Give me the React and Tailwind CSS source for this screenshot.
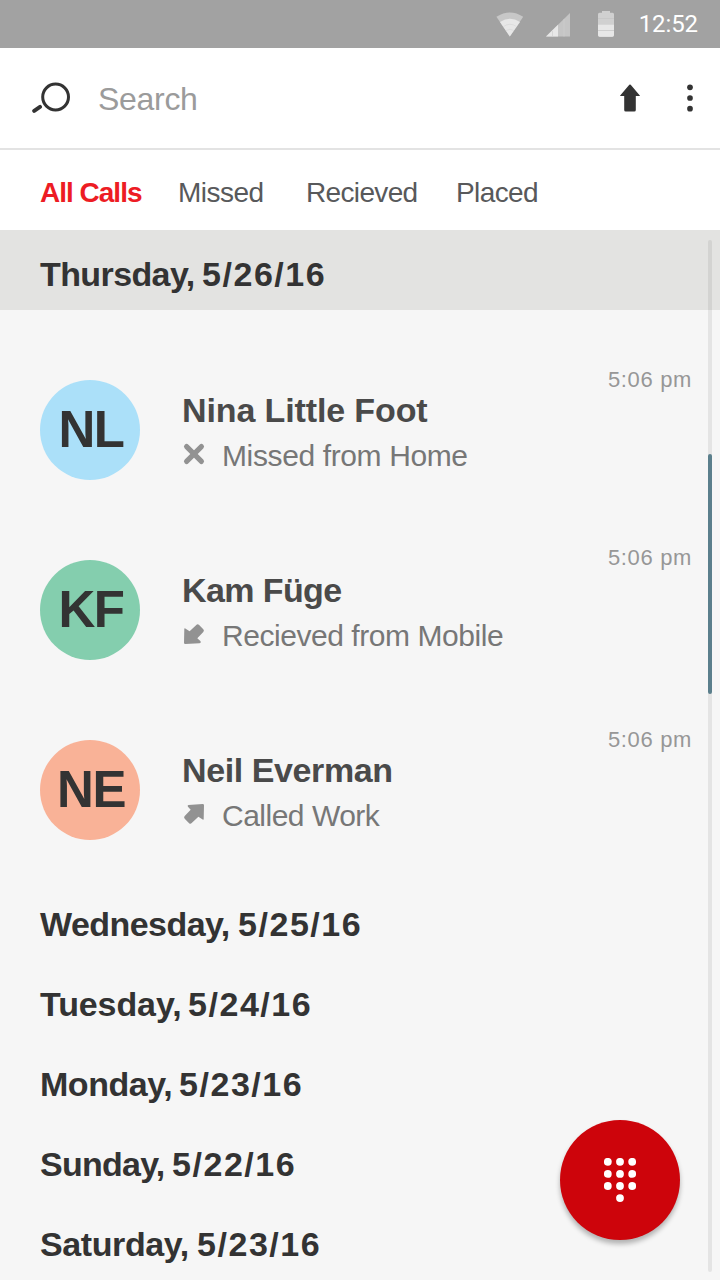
const calls = [
  {
    initials: 'NL',
    name: 'Nina Little Foot',
    nameClass: 'tracking-[-0.12px]',
    detail: 'Missed from Home',
    detailClass: 'tracking-[-0.38px]',
    color: 'bg-[#abe0f9]',
    kind: 'missed',
    timeClass: 'pt-7',
  },
  {
    initials: 'KF',
    name: 'Kam Füge',
    nameClass: 'tracking-[-0.6px]',
    detail: 'Recieved from Mobile',
    detailClass: 'tracking-[-0.45px]',
    color: 'bg-[#84ceae]',
    kind: 'received',
    timeClass: 'pt-[26px]',
  },
  {
    initials: 'NE',
    name: 'Neil Everman',
    nameClass: 'tracking-[-0.4px]',
    detail: 'Called Work',
    detailClass: 'tracking-[-0.5px]',
    color: 'bg-[#f9b297]',
    kind: 'placed',
    timeClass: 'pt-7',
  },
];

const days = [
  { name: 'Wednesday,', date: '5/25/16', nameClass: 'w-[198px] tracking-[-0.55px]' },
  { name: 'Tuesday,', date: '5/24/16', nameClass: 'w-[148px] tracking-[-0.1px]' },
  { name: 'Monday,', date: '5/23/16', nameClass: 'w-[139px] tracking-[-0.45px]' },
  { name: 'Sunday,', date: '5/22/16', nameClass: 'w-[132px] tracking-[-0.75px]' },
  { name: 'Saturday,', date: '5/23/16', nameClass: 'w-[157px] tracking-[-0.4px]' },
];

function StatusBar() {
  return (
    <div className="flex h-12 shrink-0 items-center justify-end bg-[#a2a2a2] pr-[22px] text-white">
      <svg className="mr-5 h-12 w-8" viewBox="0 0 32 48">
        <path d="M2.4 16.8 Q16 8.2 29.2 16.8 L15.8 36.5 Z" fill="#c7c7c7" />
        <path d="M6 22 Q16 15.4 26 22 L15.8 36.5 Z" fill="#e7e7e7" />
        <path d="M9.5 26.5 Q16 22 22.5 26.5 M12 30.5 Q16 28 20 30.5" fill="none" stroke="#d9d9d9" strokeWidth="0.8" />
      </svg>
      <svg className="mr-7 h-12 w-6" viewBox="0 0 24 48">
        <path d="M0 36.6 24 13V36.6Z" fill="#c5c5c5" />
        <path d="M0 36.6 12 24.8V36.6Z" fill="#e7e7e7" />
        <path d="M6.5 31V36.6 M18 19V36.6" stroke="#cfcfcf" strokeWidth="0.7" />
      </svg>
      <svg className="mr-[25px] h-12 w-4" viewBox="0 0 16 48">
        <path d="M4 11h8v1.8h2.5q1.5 0 1.5 1.5V35q0 1.7-1.7 1.7H1.7Q0 36.7 0 35V14.3q0-1.5 1.5-1.5H4Z" fill="#d0d0d0" />
        <path d="M0 24.8h16V35q0 1.7-1.7 1.7H1.7Q0 36.7 0 35Z" fill="#e7e7e7" />
        <path d="M0 18.5h16M0 30.5h16" stroke="#c4c4c4" strokeWidth="0.7" />
      </svg>
      <span className="font-[Roboto,sans-serif] text-[24px] leading-[48px] tracking-[-0.1px]">12:52</span>
    </div>
  );
}

function SearchBar() {
  return (
    <div className="flex h-[102px] shrink-0 items-center border-b-2 border-[#e3e3e3] bg-white">
      <svg className="ml-8 h-8 w-[39px]" viewBox="0 0 39 32" fill="none" stroke="#333333">
        <circle cx="23.6" cy="15" r="12.9" strokeWidth="3" />
        <path d="M2.2 28.8 8 24.900" strokeWidth="4" strokeLinecap="round" />
      </svg>
      <span className="ml-[27px] pt-0.5 text-[32px] leading-[48px] tracking-[-0.3px] text-[#9b9b9b]">Search</span>
      <svg className="ml-auto h-7 w-5" viewBox="0 0 20 28" fill="#333333">
        <path d="M9.3.8q.7-.7 1.4 0L19.8 11.4q.3.600-.4.6H15.8V26q0 1.5-1.5 1.5H5.7Q4.2 27.5 4.2 26V12H.6q-.7 0-.4-.6Z" />
      </svg>
      <svg className="mr-[27px] ml-[47px] h-7 w-1.5" viewBox="0 0 6 28" fill="#333333">
        <circle cx="3" cy="3.3" r="2.85" />
        <circle cx="3" cy="14" r="2.85" />
        <circle cx="3" cy="24.7" r="2.85" />
      </svg>
    </div>
  );
}

function Tabs() {
  return (
    <nav className="flex h-20 shrink-0 items-center bg-white pt-1.5 pl-10 text-[28px] leading-[40px] whitespace-nowrap text-[#58595b]">
      <span className="w-[138px] font-bold tracking-[-1px] text-[#ed1c24]">All Calls</span>
      <span className="w-32 tracking-[-0.5px]">Missed</span>
      <span className="w-[150px] tracking-[-0.65px]">Recieved</span>
      <span className="tracking-[-0.6px]">Placed</span>
    </nav>
  );
}

function KindIcon({ kind }) {
  return (
    <svg className="-mt-1 h-6 w-6 shrink-0" viewBox="0 0 24 24" fill="#929292">
      {kind === 'missed' && (
        <path d="M4.6 4.6 19.4 19.4M19.4 4.6 4.6 19.4" stroke="#929292" strokeWidth="5.2" strokeLinecap="round" />
      )}
      {kind === 'received' && (
        <path d="M3.3 6.4 7.6 9.300 14.3 2.9Q15.6 1.5 16.9 2.8L21.3 7.3Q22.6 8.6 21.3 9.9L15.300 16.300 18.600 19.300Q19.300 21.100 17.500 21.300L3.300 22Q2 22 2 20.700L2.300 7Q2.400 5.800 3.300 6.400Z" />
      )}
      {kind === 'placed' && (
        <path d="M20.700 17.600 16.400 14.700 9.700 21.100Q8.400 22.500 7.100 21.200L2.700 16.700Q1.400 15.400 2.700 14.100L8.700 7.700 5.900 4.700Q5.200 3.200 6.500 3L20.700 2Q22 2 22 3.300L21.700 17Q21.600 18.200 20.700 17.600Z" />
      )}
    </svg>
  );
}

function CallRow({ call }) {
  return (
    <li className="flex h-[180px] items-start pr-7 pl-10">
      <div className={`mt-10 flex h-[100px] w-[100px] shrink-0 items-center justify-center rounded-full ${call.color}`}>
        <span className="pl-0.5 text-[51px] leading-[100px] font-bold tracking-[-1.5px] text-[#333333]">{call.initials}</span>
      </div>
      <div className="mt-12 ml-[42px] flex flex-col whitespace-nowrap">
        <span className={`h-[46px] text-[34px] leading-[44px] font-bold text-[#4a4a4a] ${call.nameClass}`}>{call.name}</span>
        <div className="flex h-11 items-center">
          <KindIcon kind={call.kind} />
          <span className={`ml-4 text-[30px] leading-[44px] text-[#777777] ${call.detailClass}`}>{call.detail}</span>
        </div>
      </div>
      <time className={`ml-auto text-[22px] leading-6 tracking-[0.65px] text-[#979797] ${call.timeClass}`}>5:06 pm</time>
    </li>
  );
}

function DayHeader({ day, active }) {
  return (
    <h2
      className={`flex h-20 shrink-0 items-center pt-2 pl-10 text-[34px] leading-[44px] font-bold whitespace-nowrap text-[#333333] ${active ? 'bg-[#e3e3e1]' : ''}`}
    >
      <span className={`shrink-0 ${day.nameClass}`}>{day.name} </span>
      <span className="tracking-[1.55px]">{day.date}</span>
    </h2>
  );
}

export default function App() {
  return (
    <div className="relative flex h-[1280px] w-[720px] flex-col overflow-hidden bg-[#f6f6f6] font-['Liberation_Sans',Arial,sans-serif]">
      <StatusBar />
      <SearchBar />
      <Tabs />
      <main className="flex flex-col">
        <DayHeader
          day={{ name: 'Thursday,', date: '5/26/16', nameClass: 'w-[162px] tracking-[-0.6px]' }}
          active
        />
        <ul className="flex flex-col pt-[30px]">
          {calls.map((call) => (
            <CallRow key={call.initials} call={call} />
          ))}
        </ul>
        {days.map((day) => (
          <DayHeader key={day.name} day={day} />
        ))}
      </main>
      <div className="absolute top-60 right-2 h-[1032px] w-1 rounded-full bg-black/7">
        <div className="mt-[214px] h-60 w-1 rounded-full bg-[#5b7f8c]" />
      </div>
      <button
        aria-label="Dial pad"
        className="absolute right-10 bottom-10 flex h-[120px] w-[120px] items-center justify-center rounded-full bg-[#cd040b] shadow-[0_4px_5px_rgba(0,0,0,0.28)]"
      >
        <svg className="h-11 w-8" viewBox="0 0 32 44" fill="white">
          {[3.8, 15.9, 28].map((y) =>
            [3.8, 16, 28.2].map((x) => <circle key={`${x}-${y}`} cx={x} cy={y} r="3.9" />),
          )}
          <circle cx="16" cy="40.1" r="3.9" />
        </svg>
      </button>
    </div>
  );
}
